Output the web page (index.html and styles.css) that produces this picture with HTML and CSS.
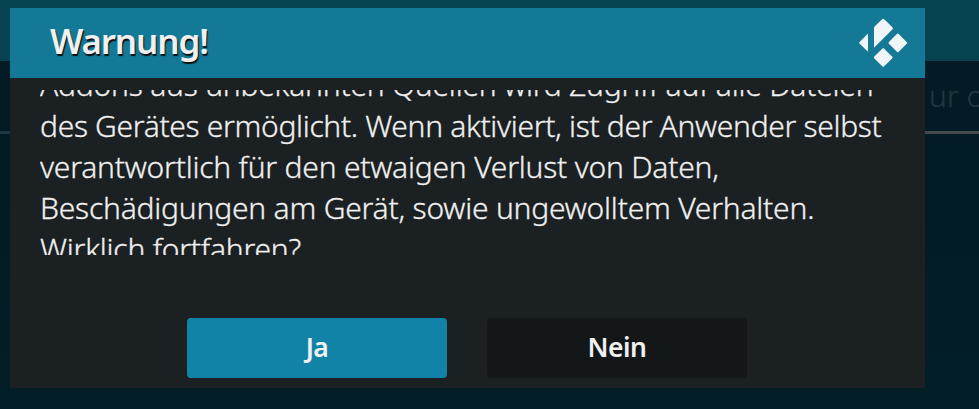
FILE: index.html
```html
<!DOCTYPE html>
<html lang="de">
<head>
    <meta charset="UTF-8">
    <meta name="viewport" content="width=device-width, initial-scale=1.0">
    <title>Warnung!</title>
    <link rel="stylesheet" href="styles.css">
</head>
<body>
    <div class="page">
        <div class="top-bar"></div>
        <div class="setting-row">
            <span class="setting-label">ur o</span>
        </div>
        <div class="separator"></div>
    </div>

    <div class="dialog">
        <div class="dialog-header">
            <h1>Warnung!</h1>
            <svg class="logo" viewBox="0 0 50 50" width="50" height="50">
                <path d="M1.4 24.2 L10 15.4 V33.8 L1.4 25.6 Q.7 24.9 1.4 24.2Z"/>
                <path d="M16 10.2 Q16 9.1 16.8 8.3 L24.4 1.1 Q25.2 .3 26 1.1 L34.6 9.6 Q35.4 10.4 34.6 11.2 L16 29.7Z"/>
                <path d="M39.1 15.8 Q39.8 15.1 40.5 15.8 L48.9 24.2 Q49.6 24.9 48.9 25.6 L40.5 34 Q39.8 34.7 39.1 34 L30.7 25.6 Q30 24.9 30.7 24.2Z"/>
                <path d="M24.5 30.4 Q25.2 29.7 25.9 30.4 L34.3 38.8 Q35 39.5 34.3 40.2 L25.9 48.6 Q25.2 49.3 24.5 48.6 L16.1 40.2 Q15.4 39.5 16.1 38.8Z"/>
            </svg>
        </div>
        <div class="dialog-text">
            <div class="lines">
                <p>Addons aus unbekannten Quellen wird Zugriff auf alle Dateien</p>
                <p class="tight">des Gerätes ermöglicht. Wenn aktiviert, ist der Anwender selbst</p>
                <p>verantwortlich für den etwaigen Verlust von Daten,</p>
                <p>Beschädigungen am Gerät, sowie ungewolltem Verhalten.</p>
                <p>Wirklich fortfahren?</p>
            </div>
        </div>
        <div class="dialog-buttons">
            <button class="button-yes">Ja</button>
            <button class="button-no">Nein</button>
        </div>
    </div>
</body>
</html>
```
FILE: styles.css
```css
* {
    margin: 0;
    padding: 0;
    box-sizing: border-box;
}
body {
    width: 979px;
    height: 409px;
    overflow: hidden;
    position: relative;
    background: linear-gradient(#021a24, #021e27);
    font-family: 'Noto Sans', sans-serif;
    color: #f0f0f0;
}
.top-bar {
    height: 61px;
    background: #06424f;
}
.setting-row {
    height: 70px;
    padding: 14px 0 0 929px;
    overflow: hidden;
    white-space: nowrap;
}
.setting-label {
    display: block;
    font-size: 30px;
    font-weight: 300;
    line-height: 41px;
    color: #22363f;
    -webkit-text-stroke: 0.3px #22363f;
}
.separator {
    height: 3px;
    background: linear-gradient(to right, #1d3842 10px, #43484d 10px);
}
/* dialog over the settings page */
.dialog {
    position: absolute;
    top: 8px;
    left: 10px;
    width: 915px;
    height: 380px;
    background: #1b2122;
}
.dialog-header {
    display: flex;
    justify-content: space-between;
    align-items: center;
    height: 70px;
    padding: 0 17px 0 40px;
    background: #147996;
}
.dialog-header h1 {
    font-size: 35px;
    font-weight: 600;
    line-height: 46px;
    letter-spacing: -1.15px;
    margin-top: -4px;
    text-shadow: 1px 2px 1px #101010;
}
.logo {
    fill: #f0f5f8;
}
.dialog-text {
    height: 165px;
    margin: 12px 0 0 30px;
    overflow: hidden;
}
.lines {
    margin-top: -26px;
}
.lines p {
    font-size: 30px;
    font-weight: 300;
    line-height: 41px;
    letter-spacing: -0.21px;
    white-space: nowrap;
    -webkit-text-stroke: 0.3px #f0f0f0;
}
.lines .tight {
    letter-spacing: -0.32px;
}
.dialog-buttons {
    display: flex;
    gap: 40px;
    margin: 63px 0 0 177px;
}
.dialog-buttons button {
    width: 260px;
    height: 60px;
    padding-bottom: 3px;
    border: none;
    border-radius: 4px;
    font-family: inherit;
    font-size: 26.5px;
    font-weight: 600;
    letter-spacing: -0.5px;
    color: #f0f0f0;
}
.dialog-buttons .button-yes {
    background: #1083a7;
}
.dialog-buttons .button-no {
    background: #141718;
}
```
